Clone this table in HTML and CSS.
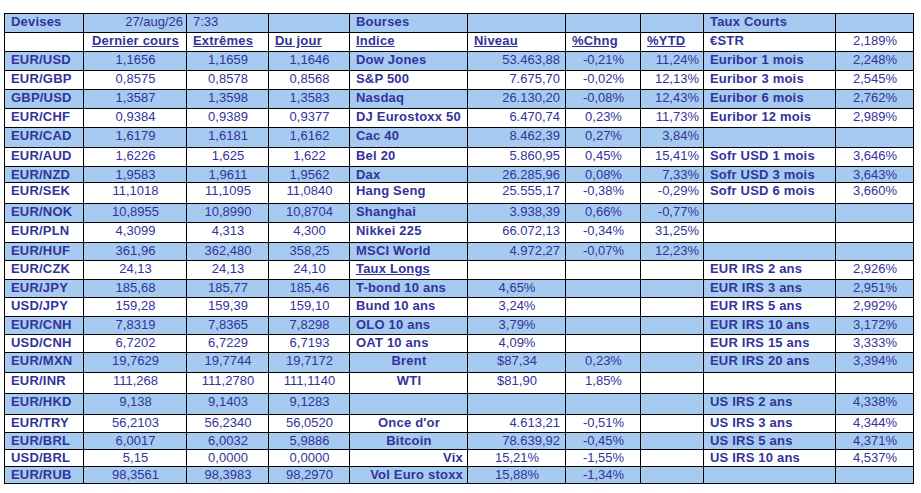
FILE: index.html
```html
<!DOCTYPE html>
<html lang="fr">
<head>
<meta charset="utf-8">
<title>Marchés</title>
<link rel="stylesheet" href="styles.css">
</head>
<body>
<div class="sheet">
  <div class="row b hdr">
    <div>Devises</div><div class="rt">27/aug/26</div><div class="lt">7:33</div><div></div>
    <div>Bourses</div><div></div><div></div><div></div>
    <div>Taux Courts</div><div></div>
  </div>
  <div class="row sub">
    <div></div><div><u>Dernier cours</u></div><div class="lt"><u>Extrêmes</u></div><div class="lt"><u>Du jour</u></div>
    <div><u>Indice</u></div><div class="lt"><u>Niveau</u></div><div class="lt"><u>%Chng</u></div><div class="lt"><u>%YTD</u></div>
    <div>€STR</div><div>2,189%</div>
  </div>
  <div class="row b">
    <div>EUR/USD</div><div>1,1656</div><div>1,1659</div><div>1,1646</div>
    <div>Dow Jones</div><div>53.463,88</div><div>-0,21%</div><div>11,24%</div>
    <div>Euribor 1 mois</div><div>2,248%</div>
  </div>
  <div class="row">
    <div>EUR/GBP</div><div>0,8575</div><div>0,8578</div><div>0,8568</div>
    <div>S&amp;P 500</div><div>7.675,70</div><div>-0,02%</div><div>12,13%</div>
    <div>Euribor 3 mois</div><div>2,545%</div>
  </div>
  <div class="row b">
    <div>GBP/USD</div><div>1,3587</div><div>1,3598</div><div>1,3583</div>
    <div>Nasdaq</div><div>26.130,20</div><div>-0,08%</div><div>12,43%</div>
    <div>Euribor 6 mois</div><div>2,762%</div>
  </div>
  <div class="row">
    <div>EUR/CHF</div><div>0,9384</div><div>0,9389</div><div>0,9377</div>
    <div>DJ Eurostoxx 50</div><div>6.470,74</div><div>0,23%</div><div>11,73%</div>
    <div>Euribor 12 mois</div><div>2,989%</div>
  </div>
  <div class="row b">
    <div>EUR/CAD</div><div>1,6179</div><div>1,6181</div><div>1,6162</div>
    <div>Cac 40</div><div>8.462,39</div><div>0,27%</div><div>3,84%</div>
    <div></div><div></div>
  </div>
  <div class="row">
    <div>EUR/AUD</div><div>1,6226</div><div>1,625</div><div>1,622</div>
    <div>Bel 20</div><div>5.860,95</div><div>0,45%</div><div>15,41%</div>
    <div>Sofr USD 1 mois</div><div>3,646%</div>
  </div>
  <div class="row b">
    <div>EUR/NZD</div><div>1,9583</div><div>1,9611</div><div>1,9562</div>
    <div>Dax</div><div>26.285,96</div><div>0,08%</div><div>7,33%</div>
    <div>Sofr USD 3 mois</div><div>3,643%</div>
  </div>
  <div class="row">
    <div>EUR/SEK</div><div>11,1018</div><div>11,1095</div><div>11,0840</div>
    <div>Hang Seng</div><div>25.555,17</div><div>-0,38%</div><div>-0,29%</div>
    <div>Sofr USD 6 mois</div><div>3,660%</div>
  </div>
  <div class="row b">
    <div>EUR/NOK</div><div>10,8955</div><div>10,8990</div><div>10,8704</div>
    <div>Shanghai</div><div>3.938,39</div><div>0,66%</div><div>-0,77%</div>
    <div></div><div></div>
  </div>
  <div class="row">
    <div>EUR/PLN</div><div>4,3099</div><div>4,313</div><div>4,300</div>
    <div>Nikkei 225</div><div>66.072,13</div><div>-0,34%</div><div>31,25%</div>
    <div></div><div></div>
  </div>
  <div class="row b">
    <div>EUR/HUF</div><div>361,96</div><div>362,480</div><div>358,25</div>
    <div>MSCI World</div><div>4.972,27</div><div>-0,07%</div><div>12,23%</div>
    <div></div><div></div>
  </div>
  <div class="row">
    <div>EUR/CZK</div><div>24,13</div><div>24,13</div><div>24,10</div>
    <div><u>Taux Longs</u></div><div></div><div></div><div></div>
    <div>EUR IRS 2 ans</div><div>2,926%</div>
  </div>
  <div class="row b">
    <div>EUR/JPY</div><div>185,68</div><div>185,77</div><div>185,46</div>
    <div>T-bond 10 ans</div><div class="ct">4,65%</div><div></div><div></div>
    <div>EUR IRS 3 ans</div><div>2,951%</div>
  </div>
  <div class="row">
    <div>USD/JPY</div><div>159,28</div><div>159,39</div><div>159,10</div>
    <div>Bund 10 ans</div><div class="ct">3,24%</div><div></div><div></div>
    <div>EUR IRS 5 ans</div><div>2,992%</div>
  </div>
  <div class="row b">
    <div>EUR/CNH</div><div>7,8319</div><div>7,8365</div><div>7,8298</div>
    <div>OLO 10 ans</div><div class="ct">3,79%</div><div></div><div></div>
    <div>EUR IRS 10 ans</div><div>3,172%</div>
  </div>
  <div class="row">
    <div>USD/CNH</div><div>6,7202</div><div>6,7229</div><div>6,7193</div>
    <div>OAT 10 ans</div><div class="ct">4,09%</div><div></div><div></div>
    <div>EUR IRS 15 ans</div><div>3,333%</div>
  </div>
  <div class="row b">
    <div>EUR/MXN</div><div>19,7629</div><div>19,7744</div><div>19,7172</div>
    <div class="ct">Brent</div><div class="ct">$87,34</div><div>0,23%</div><div></div>
    <div>EUR IRS 20 ans</div><div>3,394%</div>
  </div>
  <div class="row">
    <div>EUR/INR</div><div>111,268</div><div>111,2780</div><div>111,1140</div>
    <div class="ct">WTI</div><div class="ct">$81,90</div><div>1,85%</div><div></div>
    <div></div><div></div>
  </div>
  <div class="row b">
    <div>EUR/HKD</div><div>9,138</div><div>9,1403</div><div>9,1283</div>
    <div></div><div></div><div></div><div></div>
    <div>US IRS 2 ans</div><div>4,338%</div>
  </div>
  <div class="row">
    <div>EUR/TRY</div><div>56,2103</div><div>56,2340</div><div>56,0520</div>
    <div class="ct">Once d'or</div><div>4.613,21</div><div>-0,51%</div><div></div>
    <div>US IRS 3 ans</div><div>4,344%</div>
  </div>
  <div class="row b">
    <div>EUR/BRL</div><div>6,0017</div><div>6,0032</div><div>5,9886</div>
    <div class="ct">Bitcoin</div><div>78.639,92</div><div>-0,45%</div><div></div>
    <div>US IRS 5 ans</div><div>4,371%</div>
  </div>
  <div class="row">
    <div>USD/BRL</div><div>5,15</div><div>0,0000</div><div>0,0000</div>
    <div class="rt">Vix</div><div class="ct">15,21%</div><div>-1,55%</div><div></div>
    <div>US IRS 10 ans</div><div>4,537%</div>
  </div>
  <div class="row b">
    <div>EUR/RUB</div><div>98,3561</div><div>98,3983</div><div>98,2970</div>
    <div class="rt">Vol Euro stoxx</div><div class="ct">15,88%</div><div>-1,34%</div><div></div>
    <div></div><div></div>
  </div>
</div>
</body>
</html>
```
FILE: styles.css
```css
html, body {
  margin: 0;
  background: #ffffff;
}
body {
  padding: 13px 0 0 4px;
  font-family: "Liberation Sans", Arial, sans-serif;
  font-size: 13px;
  line-height: 15px;
  color: #333399;
}
.sheet {
  display: grid;
  width: 910px;
  box-sizing: border-box;
  grid-template-columns: 79px 103px 82px 81px 118px 98px 75px 63px 132px 78px;
  grid-template-rows: 19px 19px 19px 19px 19px 19px 20px 19px 16px 21px 19px 20px 18px 19px 18px 19px 18px 18px 20px 21px 21px 18px 17px 17px 17px;
  border-left: 1px solid #000;
  border-top: 1px solid #000;
}
.row {
  display: contents;
}
.row > div {
  box-sizing: border-box;
  border-right: 1px solid #000;
  border-bottom: 1px solid #000;
  padding: 0 5px 0 6px;
  white-space: nowrap;
  overflow: visible;
  background: #ffffff;
  text-align: center;
}
.row.b > div {
  background: #a6caf0;
}
.row > div:nth-child(1),
.row > div:nth-child(5),
.row > div:nth-child(9) {
  font-weight: bold;
  letter-spacing: 0.2px;
  text-align: left;
}
.row > div:nth-child(6),
.row > div:nth-child(8) {
  text-align: right;
}
.row > div:nth-child(8) {
  padding-right: 4px;
}
.sub > div {
  font-weight: bold;
  letter-spacing: 0.2px;
}
.sub > div:nth-child(10) {
  font-weight: normal;
  letter-spacing: 0;
}
.row > div.lt {
  text-align: left;
}
.row > div.rt {
  text-align: right;
  padding-right: 4px;
}
.row > div.ct {
  text-align: center;
}
.hdr > div.rt {
  padding-right: 3px;
}
u {
  text-decoration: underline;
  text-underline-offset: 1px;
}
```
